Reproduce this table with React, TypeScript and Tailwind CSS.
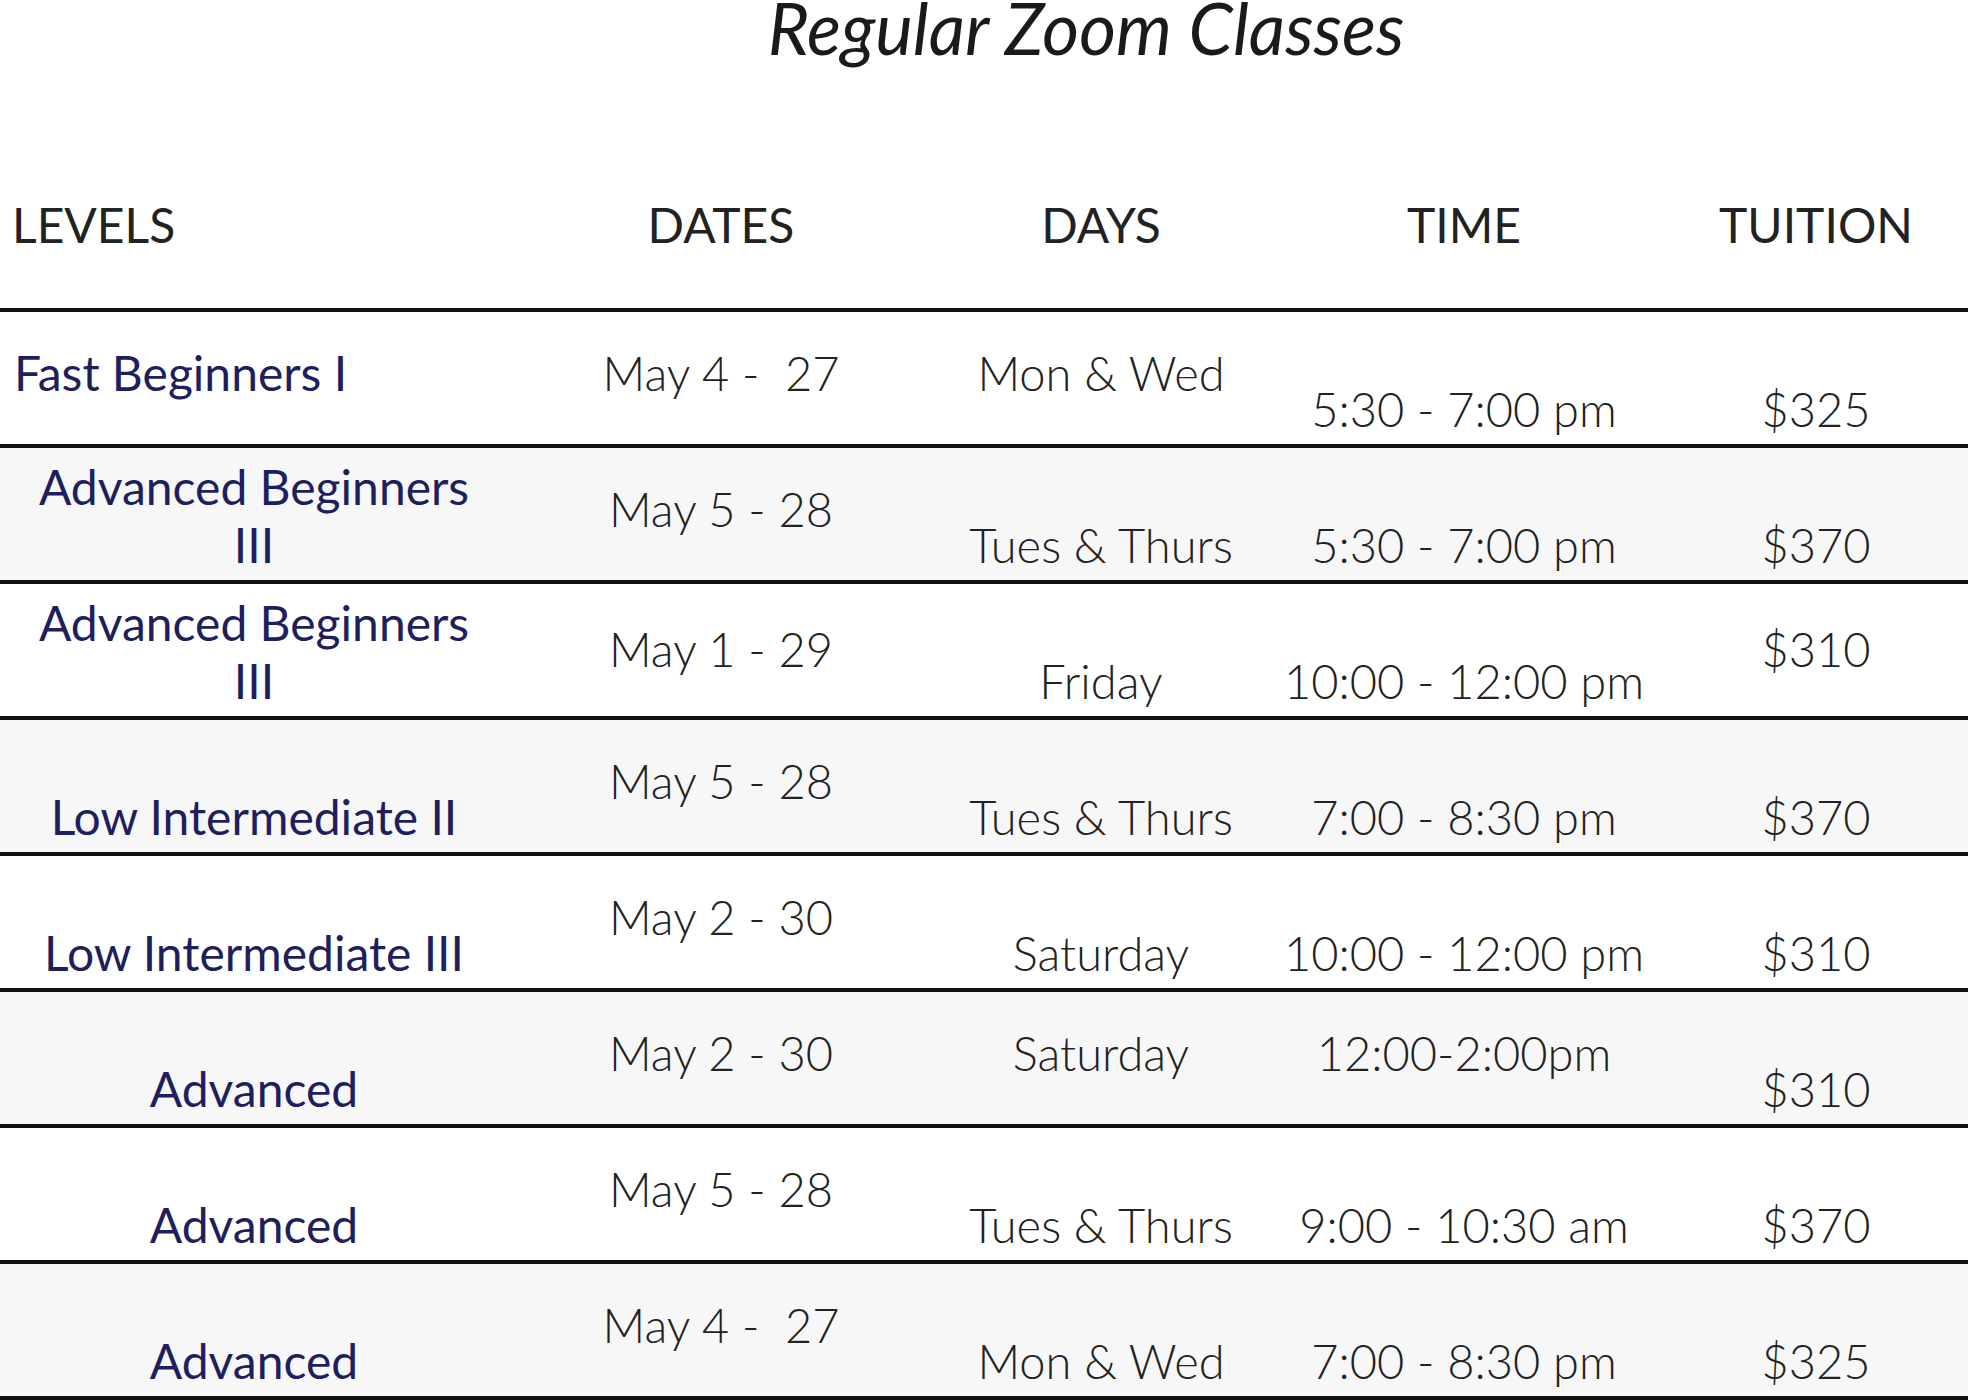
import React from "react";

type Align = "t" | "t2" | "b";
type Cell = { text: string[]; a: Align };
type Row = { level: Cell; dates: Cell; days: Cell; time: Cell; tuition: Cell; gray: boolean; levelLeft?: boolean };

const alignCls: Record<Align, string> = {
  t: "justify-start pt-[32px]",
  t2: "justify-start pt-[36px]",
  b: "justify-end pb-[6px]",
};

const rows: Row[] = [
  {
    level: { text: ["Fast Beginners I"], a: "t" },
    dates: { text: ["May 4 -  27"], a: "t" },
    days: { text: ["Mon & Wed"], a: "t" },
    time: { text: ["5:30 - 7:00 pm"], a: "b" },
    tuition: { text: ["$325"], a: "b" },
    gray: false,
    levelLeft: true,
  },
  {
    level: { text: ["Advanced Beginners", "III"], a: "b" },
    dates: { text: ["May 5 - 28"], a: "t" },
    days: { text: ["Tues & Thurs"], a: "b" },
    time: { text: ["5:30 - 7:00 pm"], a: "b" },
    tuition: { text: ["$370"], a: "b" },
    gray: true,
  },
  {
    level: { text: ["Advanced Beginners", "III"], a: "b" },
    dates: { text: ["May 1 - 29"], a: "t2" },
    days: { text: ["Friday"], a: "b" },
    time: { text: ["10:00 - 12:00 pm"], a: "b" },
    tuition: { text: ["$310"], a: "t2" },
    gray: false,
  },
  {
    level: { text: ["Low Intermediate II"], a: "b" },
    dates: { text: ["May 5 - 28"], a: "t" },
    days: { text: ["Tues & Thurs"], a: "b" },
    time: { text: ["7:00 - 8:30 pm"], a: "b" },
    tuition: { text: ["$370"], a: "b" },
    gray: true,
  },
  {
    level: { text: ["Low Intermediate III"], a: "b" },
    dates: { text: ["May 2 - 30"], a: "t" },
    days: { text: ["Saturday"], a: "b" },
    time: { text: ["10:00 - 12:00 pm"], a: "b" },
    tuition: { text: ["$310"], a: "b" },
    gray: false,
  },
  {
    level: { text: ["Advanced"], a: "b" },
    dates: { text: ["May 2 - 30"], a: "t" },
    days: { text: ["Saturday"], a: "t" },
    time: { text: ["12:00-2:00pm"], a: "t" },
    tuition: { text: ["$310"], a: "b" },
    gray: true,
  },
  {
    level: { text: ["Advanced"], a: "b" },
    dates: { text: ["May 5 - 28"], a: "t" },
    days: { text: ["Tues & Thurs"], a: "b" },
    time: { text: ["9:00 - 10:30 am"], a: "b" },
    tuition: { text: ["$370"], a: "b" },
    gray: false,
  },
  {
    level: { text: ["Advanced"], a: "b" },
    dates: { text: ["May 4 -  27"], a: "t" },
    days: { text: ["Mon & Wed"], a: "b" },
    time: { text: ["7:00 - 8:30 pm"], a: "b" },
    tuition: { text: ["$325"], a: "b" },
    gray: true,
  },
];

function BodyCell({
  cell,
  level,
  left,
  extra,
}: {
  cell: Cell;
  level?: boolean;
  left?: boolean;
  extra?: string;
}) {
  return (
    <div
      className={`flex flex-col ${alignCls[cell.a]} ${left ? "items-start pl-[14px]" : "items-center"} ${
        level ? "text-[#1e1f5c] font-normal text-[48px]" : "text-[#222222] font-light text-[47px]"
      } ${extra ?? ""}`}
    >
      {cell.text.map((t, i) => (
        <span key={i} className="whitespace-pre leading-[58px]">
          {t}
        </span>
      ))}
    </div>
  );
}

export default function App() {
  return (
    <div className="w-[1968px] h-[1400px] bg-white overflow-hidden font-['Lato','Open_Sans',sans-serif]">
      <div className="flex justify-center pl-[204px] h-[56px]">
        <h1 className="italic font-normal text-[71px] leading-[56px] text-[#1a1a1a] whitespace-nowrap">
          Regular Zoom Classes
        </h1>
      </div>
      <div className="grid grid-cols-[512px_418px_342px_384px_312px] h-[252px] items-end pb-[55px] text-[48px] leading-[56px] text-[#222222] font-normal">
        <div className="pl-[12px]">LEVELS</div>
        <div className="text-center">DATES</div>
        <div className="text-center">DAYS</div>
        <div className="text-center">TIME</div>
        <div className="text-center pl-[8px]">TUITION</div>
      </div>
      {rows.map((r, i) => (
        <div
          key={i}
          className={`grid grid-cols-[512px_418px_342px_384px_312px] h-[136px] border-t-4 border-[#111111] ${
            r.gray ? "bg-[#f7f7f7]" : "bg-white"
          }`}
        >
          <BodyCell cell={r.level} level left={r.levelLeft} extra={r.levelLeft ? "" : "pr-[4px]"} />
          <BodyCell cell={r.dates} />
          <BodyCell cell={r.days} />
          <BodyCell cell={r.time} />
          <BodyCell cell={r.tuition} extra="pl-[8px]" />
        </div>
      ))}
      <div className="h-[4px] bg-[#111111]" />
    </div>
  );
}
